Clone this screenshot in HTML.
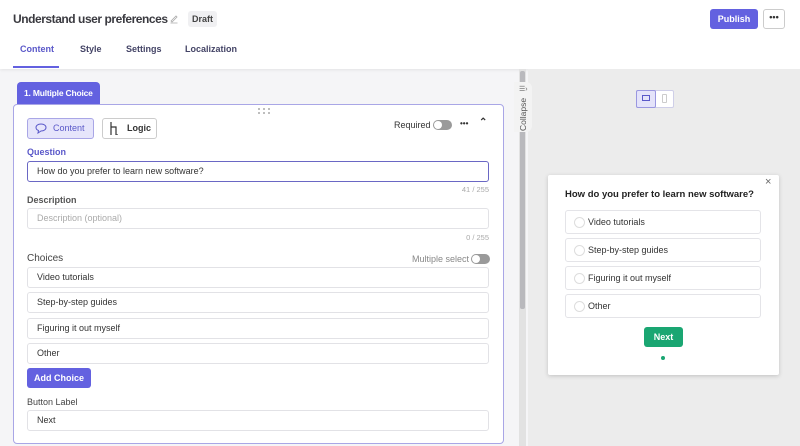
<!DOCTYPE html>
<html><head><style>
*{box-sizing:border-box;margin:0;padding:0;white-space:nowrap}
body{width:800px;height:446px;overflow:hidden;font-family:"Liberation Sans",sans-serif;background:#f5f5f7;position:relative;color:#333}
.a{position:absolute}
.inp{position:absolute;left:27px;width:462px;height:21px;border:1px solid #e2e2e6;border-radius:3px;background:#fff;font-size:9px;padding-left:9px;line-height:19px;color:#333}
.lbl{position:absolute;left:27px;font-size:9px;color:#444}
.opt{position:absolute;left:565px;width:196px;height:24px;border:1px solid #e4e4e8;border-radius:3px;font-size:9px;line-height:22px;padding-left:22px;color:#333}
.opt:before{content:"";position:absolute;left:8px;top:6px;width:9px;height:9px;border:1px solid #ddd;border-radius:50%}
.tog{position:absolute;width:19px;height:10px;border-radius:5px;background:#9a9a9a}
.tog:after{content:"";position:absolute;left:1px;top:1px;width:8px;height:8px;border-radius:50%;background:#fff}
</style></head><body>
<div class="a" style="left:0;top:0;width:800px;height:69px;background:#fff;box-shadow:0 1px 3px rgba(0,0,0,.08)"></div>
<div class="a" style="left:13px;top:12px;font-size:12px;font-weight:bold;color:#3a3a40;letter-spacing:-0.45px">Understand user preferences</div>
<svg class="a" style="left:169px;top:13px" width="10" height="11" viewBox="0 0 10 11"><path d="M2 8 L7 3 L8 4 L3 9 Z M1.5 10 H8.5" stroke="#aaa" fill="none" stroke-width="0.8"/></svg>
<div class="a" style="left:188px;top:11px;width:29px;height:16px;background:#f0f0f2;border-radius:3px;font-size:9px;font-weight:bold;line-height:16px;text-align:center;color:#444">Draft</div>
<div class="a" style="left:710px;top:9px;width:48px;height:20px;background:#6361e0;border-radius:3px;color:#fff;font-size:9px;font-weight:bold;line-height:20px;text-align:center">Publish</div>
<div class="a" style="left:763px;top:9px;width:22px;height:20px;border:1px solid #ccc;border-radius:3px;font-size:9px;line-height:14px;text-align:center;font-weight:bold;color:#333">•••</div>
<div class="a" style="top:44px;left:20px;font-size:9px;font-weight:bold;color:#5a58c9">Content</div>
<div class="a" style="top:44px;left:80px;font-size:9px;font-weight:bold;color:#444466">Style</div>
<div class="a" style="top:44px;left:126px;font-size:9px;font-weight:bold;color:#444466">Settings</div>
<div class="a" style="top:44px;left:185px;font-size:9px;font-weight:bold;color:#444466">Localization</div>
<div class="a" style="left:13px;top:66px;width:46px;height:2px;background:#6361e0"></div>
<div class="a" style="left:528px;top:69px;width:272px;height:377px;background:#ececec"></div>
<div class="a" style="left:519px;top:69px;width:7px;height:377px;background:#e2e2e2"></div>
<div class="a" style="left:520px;top:71px;width:5px;height:238px;background:#b9b9bd;border-radius:2px"></div>
<div class="a" style="left:514px;top:82px;width:18px;height:50px;background:#f3f3f3;border-radius:0 6px 6px 0"></div>
<div class="a" style="left:519px;top:85px;font-size:7px;color:#666">☰›</div>
<div class="a" style="font-size:8.5px;color:#555;transform:rotate(-90deg);transform-origin:left top;top:131px;left:518px">Collapse</div>
<div class="a" style="left:636px;top:90px;width:38px;height:18px;border:1px solid #cfcfe8;border-radius:2px;background:#fff"></div>
<div class="a" style="left:636px;top:90px;width:20px;height:18px;border:1px solid #9a97e0;background:#e4e3fa;border-radius:2px"></div>
<div class="a" style="left:642px;top:95px;width:8px;height:6px;border:1px solid #5a58c9"></div>
<div class="a" style="left:662px;top:94px;width:5px;height:9px;border:1px solid #ccc;border-radius:1px"></div>
<div class="a" style="left:17px;top:82px;width:83px;height:23px;background:#6361e0;border-radius:4px 4px 0 0;color:#fff;font-size:8.5px;font-weight:bold;line-height:23px;padding-left:7px;letter-spacing:-0.2px">1. Multiple Choice</div>
<div class="a" style="left:13px;top:104px;width:491px;height:340px;border:1px solid #a9a6e6;border-radius:4px;background:#fff"></div>
<svg class="a" style="left:257px;top:107px" width="14" height="8"><g fill="#aaa"><circle cx="2" cy="2" r="1"/><circle cx="7" cy="2" r="1"/><circle cx="12" cy="2" r="1"/><circle cx="2" cy="6" r="1"/><circle cx="7" cy="6" r="1"/><circle cx="12" cy="6" r="1"/></g></svg>
<div class="a" style="left:27px;top:118px;width:67px;height:21px;border:1px solid #a9a6e6;border-radius:3px;background:#e6e5fb;font-size:9px;color:#5a58c9;line-height:19px;padding-left:25px">Content</div>
<svg class="a" style="left:35px;top:123px" width="12" height="11"><path d="M6 1 C9 1 11 2.5 11 4.5 C11 6.5 9 8 6 8 L3 10 L3.5 7.5 C2 7 1 6 1 4.5 C1 2.5 3 1 6 1Z" fill="none" stroke="#5a58c9" stroke-width="1"/></svg>
<div class="a" style="left:102px;top:118px;width:55px;height:21px;border:1px solid #ccc;border-radius:3px;font-size:9px;font-weight:bold;color:#333;line-height:19px;padding-left:24px">Logic</div>
<svg class="a" style="left:110px;top:122px" width="10" height="13"><path d="M1 0 V13 M1 5 H6 V13 H8" fill="none" stroke="#333" stroke-width="1.2"/></svg>
<div class="a" style="left:394px;top:120px;font-size:9px;color:#333">Required</div>
<div class="tog" style="left:433px;top:120px"></div>
<div class="a" style="left:460px;top:119px;font-size:8px;font-weight:bold">•••</div>
<div class="a" style="left:479px;top:117px;font-size:10px;font-weight:bold">⌃</div>
<div class="lbl" style="top:147px;color:#5a58c9;font-weight:bold">Question</div>
<div class="inp" style="top:161px;border-color:#6a67c4;border-width:1.5px">How do you prefer to learn new software?</div>
<div class="a" style="left:450px;top:185px;width:39px;text-align:right;font-size:7.5px;color:#aaa">41 / 255</div>
<div class="lbl" style="top:195px;font-weight:bold;color:#555">Description</div>
<div class="inp" style="top:208px;color:#aaa">Description (optional)</div>
<div class="a" style="left:450px;top:233px;width:39px;text-align:right;font-size:7.5px;color:#aaa">0 / 255</div>
<div class="lbl" style="top:253px;font-size:10px;color:#444">Choices</div>
<div class="a" style="left:412px;top:254px;font-size:9px;color:#888">Multiple select</div>
<div class="tog" style="left:471px;top:254px"></div>
<div class="inp" style="top:267px">Video tutorials</div>
<div class="inp" style="top:292px">Step-by-step guides</div>
<div class="inp" style="top:318px">Figuring it out myself</div>
<div class="inp" style="top:343px">Other</div>
<div class="a" style="left:27px;top:368px;width:64px;height:20px;background:#6361e0;border-radius:3px;color:#fff;font-size:9px;font-weight:bold;line-height:20px;text-align:center">Add Choice</div>
<div class="lbl" style="top:397px">Button Label</div>
<div class="inp" style="top:410px">Next</div>
<div class="a" style="left:548px;top:175px;width:231px;height:200px;background:#fff;border-radius:2px;box-shadow:0 1px 4px rgba(0,0,0,.18)"></div>
<div class="a" style="left:765px;top:176px;font-size:11px;color:#666">×</div>
<div class="a" style="left:565px;top:189px;font-size:9.5px;font-weight:bold;color:#222">How do you prefer to learn new software?</div>
<div class="opt" style="top:210px">Video tutorials</div>
<div class="opt" style="top:238px">Step-by-step guides</div>
<div class="opt" style="top:266px">Figuring it out myself</div>
<div class="opt" style="top:294px">Other</div>
<div class="a" style="left:644px;top:327px;width:39px;height:20px;background:#1aa672;border-radius:3px;color:#fff;font-size:9px;font-weight:bold;line-height:20px;text-align:center">Next</div>
<div class="a" style="left:661px;top:356px;width:4px;height:4px;border-radius:50%;background:#1aa672"></div>
</body></html>
